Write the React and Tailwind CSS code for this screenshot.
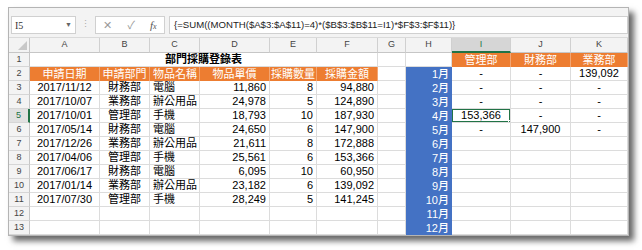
const font = { fontFamily: '"Liberation Sans", "Noto Sans CJK TC", sans-serif' };

const cols = [
  { k: 'A', w: 'w-[70px]' },
  { k: 'B', w: 'w-[50px]' },
  { k: 'C', w: 'w-[50px]' },
  { k: 'D', w: 'w-[70px]' },
  { k: 'E', w: 'w-[47px]' },
  { k: 'F', w: 'w-[61px]' },
  { k: 'G', w: 'w-[28px]' },
  { k: 'H', w: 'w-[46px]' },
  { k: 'I', w: 'w-[59px]' },
  { k: 'J', w: 'w-[60px]' },
  { k: 'K', w: 'w-[57px]' },
];

const orders = [
  ['2017/11/12', '財務部', '電腦', '11,860', '8', '94,880'],
  ['2017/10/07', '業務部', '辦公用品', '24,978', '5', '124,890'],
  ['2017/10/01', '管理部', '手機', '18,793', '10', '187,930'],
  ['2017/05/14', '財務部', '電腦', '24,650', '6', '147,900'],
  ['2017/12/26', '業務部', '辦公用品', '21,611', '8', '172,888'],
  ['2017/04/06', '管理部', '手機', '25,561', '6', '153,366'],
  ['2017/06/17', '財務部', '電腦', '6,095', '10', '60,950'],
  ['2017/01/14', '業務部', '辦公用品', '23,182', '6', '139,092'],
  ['2017/07/30', '管理部', '手機', '28,249', '5', '141,245'],
];

const heads = ['申請日期', '申請部門', '物品名稱', '物品單價', '採購數量', '採購金額'];
const align = ['justify-center', 'justify-center', 'justify-start', 'justify-end', 'justify-end', 'justify-end'];

// 月份彙總 (I~K)
const summary = [
  ['-', '-', '139,092'],
  ['-', '-', '-'],
  ['-', '-', '-'],
  ['153,366', '-', '-'],
  ['-', '147,900', '-'],
];

const grid = 'border-r border-b border-[#dcdcdc]';

const Cell = ({ w, className = '', children }) => (
  <div className={`${w} h-full shrink-0 flex items-center px-[3px] overflow-hidden whitespace-nowrap ${className}`}>
    {children}
  </div>
);

const RowHead = ({ n, active }) => (
  <div
    className={`w-[21px] h-full shrink-0 flex items-center justify-center text-[9px] border-b border-[#d6d6d6] ${
      active
        ? 'bg-[#e1e1e1] text-[#217346] border-r-2 border-r-[#217346]'
        : 'bg-[#f3f3f3] text-[#444] border-r border-r-[#c6c6c6]'
    }`}
  >
    {n}
  </div>
);

const SheetRow = ({ r }) => {
  const cells = [];
  const month = r >= 2 ? `${r - 1}月` : null;

  if (r === 1) {
    cells.push(
      <Cell key="t" w="w-[348px]" className={`justify-center font-semibold ${grid}`}>部門採購登錄表</Cell>
    );
  } else if (r === 2) {
    heads.forEach((h, i) =>
      cells.push(
        <Cell key={h} w={cols[i].w} className={`${i === 2 ? 'justify-start' : 'justify-center'} bg-[#ed7d31] text-white border-r border-[#f3a572]`}>
          {h}
        </Cell>
      )
    );
  } else {
    const row = orders[r - 3] || ['', '', '', '', '', ''];
    row.forEach((v, i) =>
      cells.push(
        <Cell key={i} w={cols[i].w} className={`${align[i]} ${grid}`}>{v}</Cell>
      )
    );
  }

  cells.push(<Cell key="g" w={cols[6].w} className={grid} />);

  cells.push(
    month ? (
      <Cell key="h" w={cols[7].w} className="justify-end bg-[#4472c4] text-white font-medium">{month}</Cell>
    ) : (
      <Cell key="h" w={cols[7].w} className={grid} />
    )
  );

  ['管理部', '財務部', '業務部'].forEach((d, i) => {
    const w = cols[8 + i].w;
    if (r === 1) {
      cells.push(
        <Cell key={d} w={w} className="justify-center bg-[#ed7d31] text-white border-r border-[#f3a572]">{d}</Cell>
      );
    } else {
      const v = summary[r - 2] ? summary[r - 2][i] : '';
      const sel = r === 5 && i === 0;
      cells.push(
        <Cell key={d} w={w} className={`justify-center relative ${grid}`}>
          {v}
          {sel && (
            <>
              <div className="absolute -left-px -top-px right-[-1px] bottom-[-1px] border-2 border-[#217346]" />
              <div className="absolute right-[-3px] bottom-[-3px] w-[5px] h-[5px] bg-[#217346] border border-white" />
            </>
          )}
        </Cell>
      );
    }
  });

  return (
    <div className="flex h-[14px]">
      <RowHead n={r} active={r === 5} />
      {cells}
    </div>
  );
};

export default function App() {
  return (
    <div className="w-[642px] h-[250px] bg-white pt-[7px] pl-[8px]" style={font}>
      <div className="w-[621px] h-[229px] bg-white border border-[#b4b4b4] shadow-[5px_5px_6px_rgba(0,0,0,0.6)] overflow-hidden text-[11px] text-black">
        {/* formula bar */}
        <div className="h-[30px] bg-[#f3f3f3] flex items-start pt-[8px] pl-[2px] gap-[4px] border-b border-[#dadada]">
          <div className="w-[65px] h-[18px] bg-white border border-[#d0d0d0] flex items-center justify-between px-[3px]">
            <span className="text-[10px] text-[#333]" style={{ fontFamily: '"Liberation Serif", serif' }}>I5</span>
            <span className="text-[7px] text-[#666]">▼</span>
          </div>
          <div className="w-[11px] h-[18px] flex items-center justify-center text-[#aaa] text-[9px]">⋮</div>
          <div className="w-[70px] h-[18px] bg-white border border-[#d0d0d0] flex items-center justify-around text-[#9a9a9a] text-[11px]">
            <span>✕</span>
            <span>✓</span>
            <span className="italic text-[#555]" style={{ fontFamily: '"Liberation Serif", serif' }}>
              f<span className="text-[8px]">x</span>
            </span>
          </div>
          <div className="flex-1 h-[18px] bg-white border border-[#d0d0d0] flex items-center px-[4px] text-[9.6px] text-[#222] whitespace-nowrap">
            {'{=SUM((MONTH($A$3:$A$11)=4)*($B$3:$B$11=I1)*$F$3:$F$11)}'}
          </div>
        </div>

        {/* column headers */}
        <div className="flex h-[15px] bg-[#f3f3f3] text-[9px] text-[#444]">
          <div className="w-[21px] h-full shrink-0 border-r border-b border-[#c6c6c6] flex items-end justify-end p-[2px]">
            <svg width="9" height="9" viewBox="0 0 9 9">
              <polygon points="9,0 9,9 0,9" fill="#c8c8c8" />
            </svg>
          </div>
          {cols.map((c) => (
            <div
              key={c.k}
              className={`${c.w} h-full shrink-0 flex items-center justify-center border-r border-[#d0d0d0] ${
                c.k === 'I' ? 'bg-[#d6d6d6] text-[#217346] border-b-2 border-b-[#217346]' : 'border-b border-b-[#c6c6c6]'
              }`}
            >
              {c.k}
            </div>
          ))}
        </div>

        {Array.from({ length: 13 }, (_, i) => (
          <SheetRow key={i} r={i + 1} />
        ))}
      </div>
    </div>
  );
}
